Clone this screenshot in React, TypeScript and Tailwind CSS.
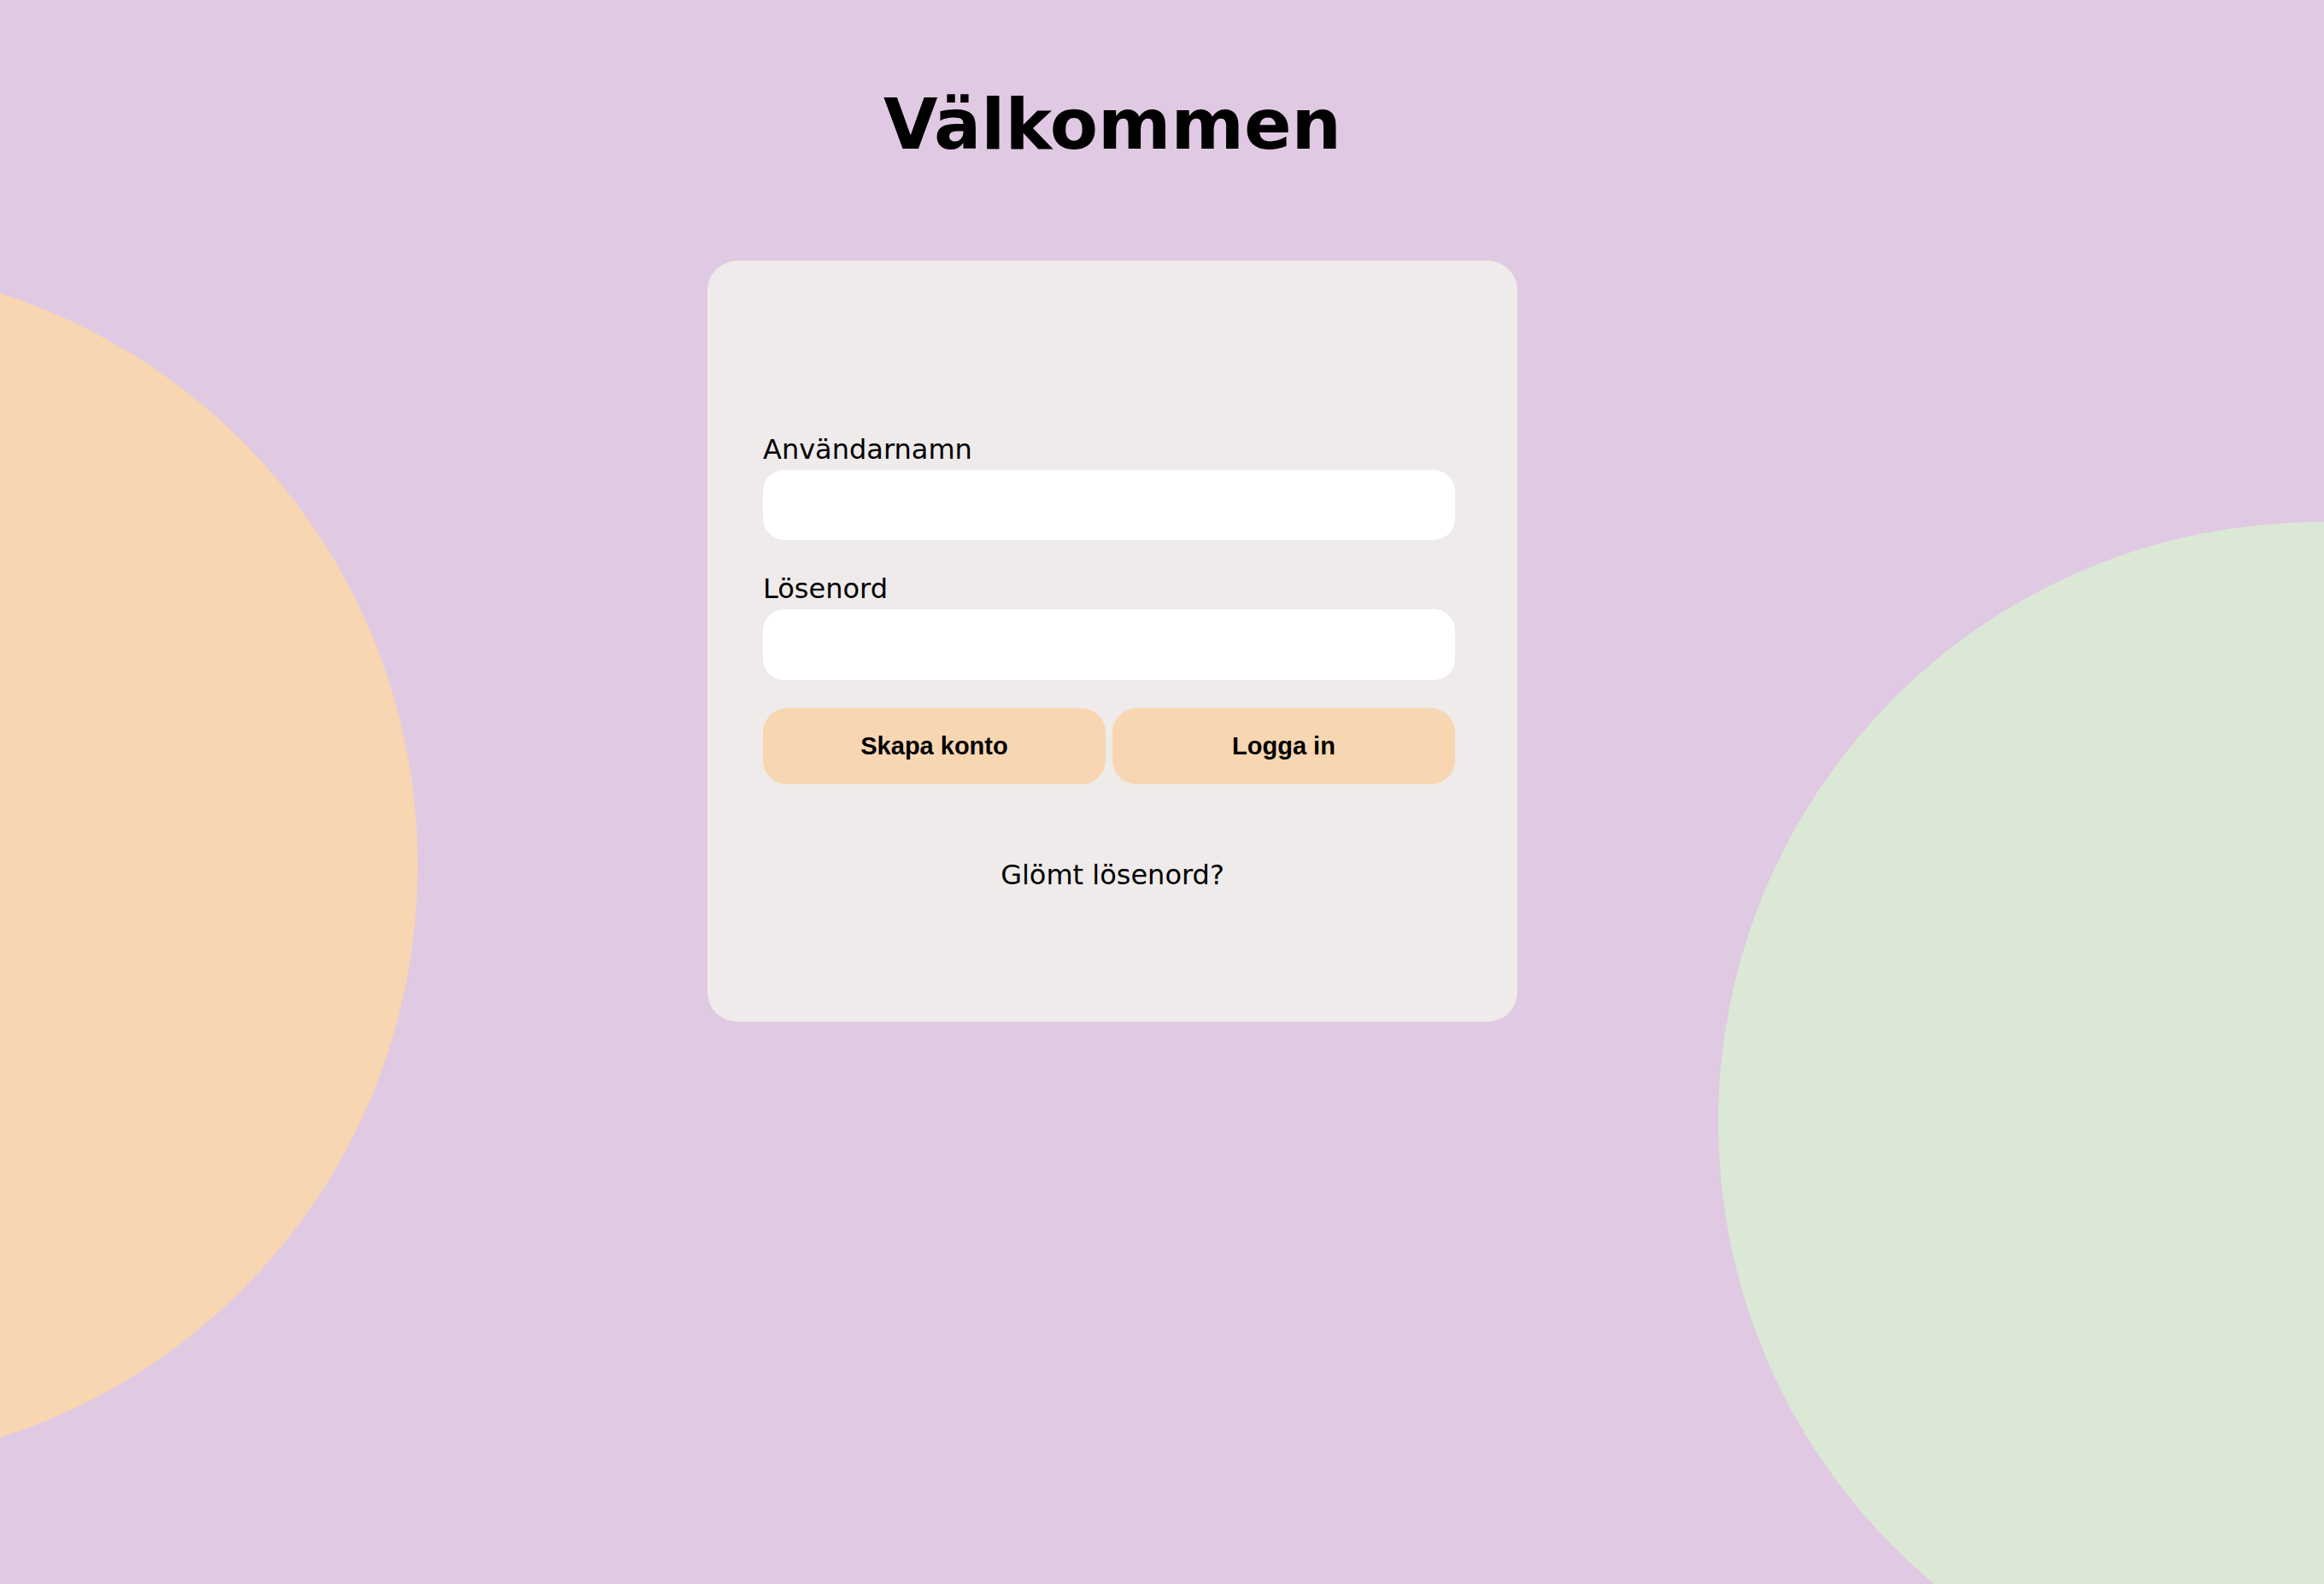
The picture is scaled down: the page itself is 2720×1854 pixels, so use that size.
import React from 'react';

const App: React.FC = () => {
    return (
        <div className="relative h-[1854px] w-full overflow-hidden bg-[#e0c9e2] text-black">
            {/* bakgrundscirklar */}
            <div className="absolute left-[-917px] top-[310px] h-[1406px] w-[1406px] rounded-full bg-[#f7d6b1]" />
            <div className="absolute left-[2011px] top-[611px] h-[1406px] w-[1406px] rounded-full bg-[#dce8d6]" />

            <main className="relative flex flex-col items-center pr-[116px]">
                <h1 className="pt-[105px] text-[82px] font-bold leading-none tracking-normal font-['DejaVu_Sans',sans-serif]">
                    Välkommen
                </h1>

                <form
                    onSubmit={(e) => e.preventDefault()}
                    className="mt-[118px] flex h-[891px] w-[948px] flex-col rounded-[35px] bg-[#eeebea] pl-[65px] pt-[205px] font-['DejaVu_Sans',sans-serif]"
                >
                    <label className="text-[32px] leading-none">Användarnamn</label>
                    <input
                        type="text"
                        className="mt-[8px] h-[82px] w-[810px] rounded-[25px] bg-white px-6 text-[28px] outline-none"
                    />

                    <label className="mt-[41px] text-[32px] leading-none">Lösenord</label>
                    <input
                        type="password"
                        className="mt-[8px] h-[83px] w-[810px] rounded-[25px] bg-white px-6 text-[28px] outline-none"
                    />

                    <div className="mt-[33px] flex w-[810px] gap-[8px]">
                        <button
                            type="button"
                            className="flex h-[89px] flex-1 items-center justify-center rounded-[28px] bg-[#f7d6b1] text-[29px] font-bold leading-none font-['Liberation_Sans',sans-serif]"
                        >
                            Skapa konto
                        </button>
                        <button
                            type="submit"
                            className="flex h-[89px] flex-1 items-center justify-center rounded-[28px] bg-[#f7d6b1] text-[29px] font-bold leading-none font-['Liberation_Sans',sans-serif]"
                        >
                            Logga in
                        </button>
                    </div>

                    <p className="mt-[90px] w-[818px] text-center text-[32px] leading-none">
                        Glömt lösenord?
                    </p>
                </form>
            </main>
        </div>
    );
};

export default App;
